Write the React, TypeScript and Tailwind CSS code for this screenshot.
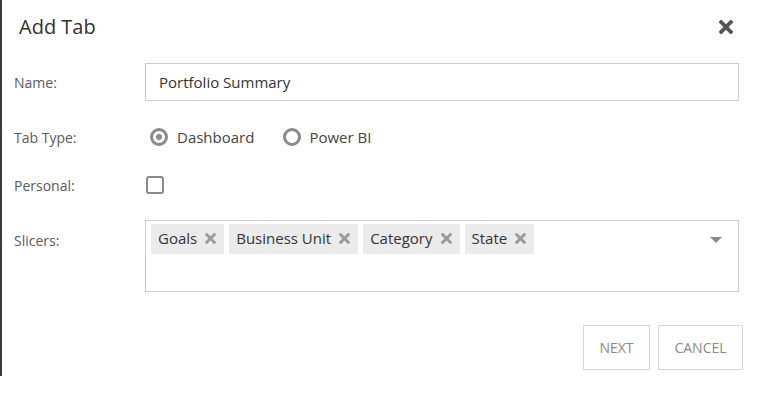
import React from "react";

const font = { fontFamily: '"Open Sans", "Noto Sans", sans-serif' };

function TimesIcon({ className }: { className?: string }) {
  return (
    <svg viewBox="0 80 352 352" className={className} fill="currentColor">
      <path d="M242.72 256l100.07-100.07c12.28-12.28 12.28-32.19 0-44.48l-22.24-22.24c-12.28-12.280-32.19-12.28-44.48 0L176 189.28 75.93 89.21c-12.28-12.28-32.19-12.28-44.48 0L9.21 111.45c-12.28 12.28-12.28 32.19 0 44.48L109.28 256 9.21 356.07c-12.28 12.28-12.28 32.190 0 44.48l22.24 22.24c12.28 12.28 32.2 12.28 44.48 0L176 322.72l100.07 100.07c12.28 12.28 32.2 12.28 44.48 0l22.24-22.24c12.28-12.28 12.28-32.19 0-44.48L242.72 256z" />
    </svg>
  );
}

function Chip({ label }: { label: string }) {
  return (
    <div className="flex h-[30px] items-center gap-[8px] bg-[#ebebeb] pl-[7px] pr-[8px] text-[15px] text-[#333]">
      <span>{label}</span>
      <TimesIcon className="h-[11px] w-[11px] text-[#9a9a9a]" />
    </div>
  );
}

function Row({ label, children, className, labelClass }: { label: string; children: React.ReactNode; className?: string; labelClass?: string }) {
  return (
    <div className={`flex ${className ?? ""}`}>
      <div className={`w-[131px] shrink-0 text-[14px] text-[#5a5a5a] ${labelClass ?? ""}`}>{label}</div>
      <div className="flex-1">{children}</div>
    </div>
  );
}

export default function App() {
  return (
    <div className="h-[407px] w-[768px] bg-white" style={font}>
      <div className="relative h-[376px] border-l-2 border-[#3c3c3c]">
        {/* Header */}
        <div className="flex items-center justify-between pl-[17px] pr-[35px] pt-[12px]">
          <h2 className="text-[20px] text-[#333]">Add Tab</h2>
          <TimesIcon className="h-[14px] w-[14px] text-[#555]" />
        </div>

        {/* Name */}
        <Row label="Name:" className="mt-[21px] items-center pl-[12px] pr-[29px]">
          <div className="flex h-[38px] items-center border border-[#ccc] px-[13px] text-[15px] text-[#333]">
            Portfolio Summary
          </div>
        </Row>

        {/* Tab Type */}
        <Row label="Tab Type:" className="mt-[25px] items-center pl-[12px]">
          <div className="flex items-center">
            <span className="ml-[5px] flex h-[18px] w-[18px] items-center justify-center rounded-full border-[3px] border-[#8a8a8a]">
              <span className="h-[6px] w-[6px] rounded-full bg-[#8a8a8a]" />
            </span>
            <span className="ml-[9px] text-[15px] text-[#444]">Dashboard</span>
            <span className="ml-[29px] h-[18px] w-[18px] rounded-full border-[3px] border-[#8a8a8a]" />
            <span className="ml-[8px] text-[15px] text-[#444]">Power BI</span>
          </div>
        </Row>

        {/* Personal */}
        <Row label="Personal:" className="mt-[26px] items-center pl-[12px]">
          <span className="ml-[1px] block h-[18px] w-[18px] rounded-[3px] border-2 border-[#8a8a8a]" />
        </Row>

        {/* Slicers */}
        <Row label="Slicers:" labelClass="pt-[10px]" className="mt-[24px] items-start pl-[12px] pr-[29px]">
          <div className="relative h-[72px] border border-[#ccc] pl-[5px] pt-[3px]">
            <div className="flex gap-[5px]">
              <Chip label="Goals" />
              <Chip label="Business Unit" />
              <Chip label="Category" />
              <Chip label="State" />
            </div>
            <span className="absolute right-[16px] top-[16px] h-0 w-0 border-x-[6px] border-t-[6px] border-x-transparent border-t-[#8a8a8a]" />
          </div>
        </Row>

        {/* Footer */}
        <div className="mt-[33px] flex justify-end gap-[8px] pr-[25px]">
          <button className="h-[45px] w-[67px] border border-[#d6d6d6] text-[14px] text-[#8a8a8a]">NEXT</button>
          <button className="h-[45px] w-[85px] border border-[#d6d6d6] text-[14px] text-[#8a8a8a]">CANCEL</button>
        </div>
      </div>
    </div>
  );
}
